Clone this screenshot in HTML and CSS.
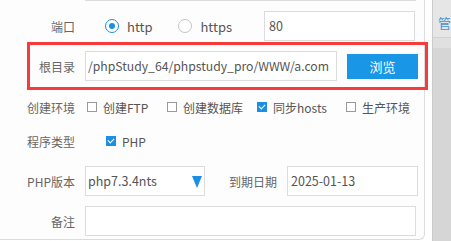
FILE: index.html
```html
<!DOCTYPE html>
<html lang="zh-CN">
<head>
    <meta charset="UTF-8">
    <meta name="viewport" content="width=device-width, initial-scale=1.0">
    <title>phpStudy - 网站设置</title>
    <link rel="stylesheet" href="styles.css">
</head>
<body>
    <div class="page">
        <div class="dialog">
            <div class="prev-field"></div>

            <div class="row">
                <label class="lbl">端口</label>
                <div class="radios">
                    <span class="radio-opt"><span class="radio on"></span>http</span>
                    <span class="radio-opt"><span class="radio"></span>https</span>
                </div>
                <div class="input port">80</div>
            </div>

            <div class="row marked">
                <label class="lbl">根目录</label>
                <div class="input path">/phpStudy_64/phpstudy_pro/WWW/a.com</div>
                <button class="btn">浏览</button>
            </div>

            <div class="row env">
                <label class="lbl">创建环境</label>
                <div class="checks">
                    <span class="check-opt w80"><span class="box"></span>创建FTP</span>
                    <span class="check-opt w90"><span class="box"></span>创建数据库</span>
                    <span class="check-opt w89"><span class="box on"></span>同步hosts</span>
                    <span class="check-opt"><span class="box"></span>生产环境</span>
                </div>
            </div>

            <div class="row type">
                <label class="lbl">程序类型</label>
                <div class="checks indent">
                    <span class="check-opt"><span class="box on"></span>PHP</span>
                </div>
            </div>

            <div class="row">
                <label class="lbl">PHP版本</label>
                <div class="input select">php7.3.4nts<span class="arrow"></span></div>
                <label class="lbl2">到期日期</label>
                <div class="input date">2025-01-13</div>
            </div>

            <div class="row">
                <label class="lbl">备注</label>
                <div class="input note"></div>
            </div>
        </div>
        <div class="gutter"></div>
        <div class="side">
            <div class="side-head"><span class="side-tab">管</span></div>
        </div>
    </div>
</body>
</html>
```

FILE: styles.css
```css
body {
    margin: 0;
    font-family: "Noto Sans CJK SC", "Noto Sans", sans-serif;
    font-size: 12px;
    color: #666;
    background: #fff;
}
.page {
    display: flex;
    height: 241px;
    overflow: hidden;
}
.dialog {
    width: 424px;
    height: 239px;
    flex-shrink: 0;
    background: #fdfdfd;
    border-right: 1px solid #dcdcdc;
    border-bottom: 1px solid #dcdcdc;
    border-bottom-right-radius: 6px;
}
.gutter {
    width: 10px;
    background: #fff;
}
.side {
    flex: 1;
    background: #d6d6d6;
    border-left: 1px solid #cbcbcb;
}
.side-head {
    height: 37px;
    background: #e6e6e6;
    border-bottom: 1px solid #c9d3dc;
    box-shadow: 0 10px 0 #e0e0e0;
    padding-left: 5px;
}
.side-tab {
    display: inline-block;
    margin-top: 15px;
    color: #4b93cf;
    font-size: 13px;
    line-height: 16px;
}
.prev-field {
    margin-left: 85px;
    width: 331px;
    border-bottom: 1px solid #dcdcdc;
}
.row {
    display: flex;
    align-items: center;
    height: 30px;
    margin-top: 10px;
    white-space: nowrap;
}
.row.env {
    margin-top: 11px;
}
.row.type {
    margin-top: 4px;
}
.lbl {
    width: 75px;
    margin-right: 10px;
    text-align: right;
    flex-shrink: 0;
}
.lbl2 {
    margin: 0 10px 0 24px;
}
.input {
    box-sizing: border-box;
    height: 30px;
    flex-shrink: 0;
    border: 1px solid #dcdcdc;
    background: #fff;
    color: #555;
    font-size: 12.5px;
    line-height: 28px;
    padding: 0 2px;
    white-space: nowrap;
    overflow: hidden;
}
.port {
    width: 151px;
    margin-left: auto;
    margin-right: 9px;
    padding-left: 4px;
}
.path {
    width: 252px;
    font-size: 12.2px;
}
.select {
    width: 120px;
    position: relative;
}
.arrow {
    position: absolute;
    right: 2px;
    top: 9px;
    width: 0;
    height: 0;
    border-left: 5px solid transparent;
    border-right: 5px solid transparent;
    border-top: 12px solid #1a8fe3;
}
.date {
    width: 131px;
    padding-left: 3px;
}
.note {
    width: 331px;
}
.btn {
    width: 71px;
    height: 25px;
    margin-left: 10px;
    border: none;
    background: #1a96e6;
    color: #fff;
    font-family: inherit;
    font-size: 13px;
    padding: 0;
}
.marked {
    position: relative;
}
.marked::after {
    content: "";
    position: absolute;
    left: 27px;
    top: -9px;
    width: 401px;
    height: 48px;
    box-sizing: border-box;
    border: 3px solid #f93a3a;
}
.radios {
    display: flex;
    align-items: center;
    padding-left: 20px;
    font-size: 13px;
    color: #555;
}
.radio-opt {
    display: flex;
    align-items: center;
    margin-right: 26px;
}
.radio {
    box-sizing: border-box;
    width: 14px;
    height: 14px;
    border-radius: 50%;
    border: 1px solid #c4c4c4;
    background: #fff;
    margin-right: 8px;
    position: relative;
}
.radio.on {
    border: 1.5px solid #1a8fe3;
}
.radio.on::after {
    content: "";
    position: absolute;
    left: 2.5px;
    top: 2.5px;
    width: 6px;
    height: 6px;
    border-radius: 50%;
    background: #1a8fe3;
}
.checks {
    display: flex;
    align-items: center;
    padding-left: 2px;
    font-size: 12px;
    color: #555;
}
.checks.indent {
    padding-left: 21px;
}
.check-opt {
    display: flex;
    align-items: center;
    flex-shrink: 0;
}
.w80 { width: 80px; }
.w90 { width: 90px; }
.w89 { width: 89px; }
.box {
    box-sizing: border-box;
    width: 10px;
    height: 10px;
    border: 1px solid #999;
    background: #fff;
    margin-right: 6px;
    position: relative;
}
.box.on {
    border-color: #1a8fe3;
    background: #1a8fe3;
}
.box.on::after {
    content: "";
    position: absolute;
    left: 2px;
    top: 0px;
    width: 3px;
    height: 5px;
    border-right: 1.5px solid #fff;
    border-bottom: 1.5px solid #fff;
    transform: rotate(45deg);
}
```
